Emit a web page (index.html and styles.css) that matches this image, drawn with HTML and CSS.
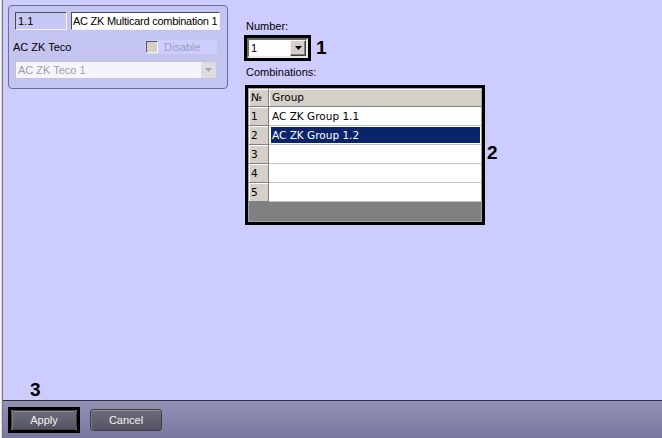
FILE: index.html
```html
<!DOCTYPE html>
<html>
<head>
<meta charset="utf-8">
<link rel="stylesheet" href="styles.css">
</head>
<body>
<div class="app">
  <div class="edge"></div>
  <div class="main">
    <div class="content">
      <div class="top">
        <div class="panel">
          <div class="row1">
            <div class="field field-id">1.1</div>
            <div class="field field-name">AC ZK Multicard combination 1</div>
          </div>
          <div class="row2">
            <div class="label">AC ZK Teco</div>
            <div class="check"><span class="box"></span><span>Disable</span></div>
          </div>
          <div class="combo-dis">
            <div class="combo-dis-text">AC ZK Teco 1</div>
            <div class="combo-dis-btn">
              <svg width="7" height="4" viewBox="0 0 7 4"><path d="M0 0h7L3.5 4z" fill="#a4a4ac"/></svg>
            </div>
          </div>
        </div>
        <div class="right">
          <div class="cap">Number:</div>
          <div class="hlrow hlrow1">
            <div class="hl">
              <div class="combo">
                <div class="combo-text">1</div>
                <div class="combo-btn">
                  <svg width="7" height="4" viewBox="0 0 7 4"><path d="M0 0h7L3.5 4z" fill="#000"/></svg>
                </div>
              </div>
            </div>
            <div class="num">1</div>
          </div>
          <div class="cap cap2">Combinations:</div>
          <div class="hlrow hlrow2">
            <div class="hl">
              <div class="grid">
                <div class="gr head">
                  <div class="rn">№</div>
                  <div class="rg">Group</div>
                </div>
                <div class="gr">
                  <div class="rn">1</div>
                  <div class="rg">AC ZK Group 1.1</div>
                </div>
                <div class="gr">
                  <div class="rn">2</div>
                  <div class="rg sel"><span>AC ZK Group 1.2</span></div>
                </div>
                <div class="gr">
                  <div class="rn">3</div>
                  <div class="rg"></div>
                </div>
                <div class="gr">
                  <div class="rn">4</div>
                  <div class="rg"></div>
                </div>
                <div class="gr">
                  <div class="rn">5</div>
                  <div class="rg"></div>
                </div>
              </div>
            </div>
            <div class="num num2">2</div>
          </div>
        </div>
      </div>
      <div class="num num3">3</div>
    </div>
    <div class="bar">
      <div class="hl hl-btn"><div class="btn btn-apply">Apply</div></div>
      <div class="btn btn-cancel">Cancel</div>
    </div>
  </div>
</div>
</body>
</html>
```
FILE: styles.css
```css
* { box-sizing: border-box; }
html, body { margin: 0; padding: 0; }
body {
  width: 662px;
  height: 438px;
  overflow: hidden;
  background: #ccccff;
  font-family: "Liberation Sans", Arial, sans-serif;
  font-size: 11px;
  color: #000;
}
.app { display: flex; width: 662px; height: 438px; }
.edge {
  width: 3px;
  flex: none;
  background: linear-gradient(to right, #f6f6f6 0 1px, #dcdcdc 1px 2px, #767686 2px 3px);
}
.main { flex: 1; display: flex; flex-direction: column; }
.content { flex: 1; display: flex; flex-direction: column; }
.top { display: flex; align-items: flex-start; padding: 5px 0 0 5px; }

/* left group panel */
.panel {
  width: 220px;
  height: 84px;
  border: 1px solid #6e6e92;
  border-radius: 4px;
  background: #c4c4f0;
  padding: 6px 7px 0 6px;
}
.row1 { display: flex; gap: 4px; }
.field {
  height: 18px;
  border: 1px solid;
  border-color: #4a4a58 #f4f4ff #f4f4ff #4a4a58;
  padding: 1px 0 0 2px;
  line-height: 15px;
  white-space: nowrap;
  overflow: hidden;
}
.field-id { width: 52px; background: #c8c8f4; }
.field-name { width: 149px; background: #fff; padding-left: 1px; letter-spacing: -0.25px; }
.row2 { display: flex; align-items: center; height: 14px; margin: 10px 0 0 -2px; }
.label { width: 132px; line-height: 14px; }
.check {
  display: flex;
  align-items: center;
  width: 72px;
  height: 14px;
  background: #cdcdff;
  color: #9e9eb8;
}
.box {
  width: 12px;
  height: 12px;
  background: #d4d0c8;
  border: 1px solid;
  border-color: #5a5a5a #f8f8f8 #f8f8f8 #5a5a5a;
  margin: 0 6px 0 1px;
}
.combo-dis {
  display: flex;
  width: 202px;
  height: 18px;
  margin-top: 7px;
  border: 1px solid #c4c4d4;
  background: #f4f4fa;
  color: #a0a0a8;
}
.combo-dis-text { flex: 1; padding-left: 2px; line-height: 16px; }
.combo-dis-btn {
  width: 15px;
  display: flex;
  align-items: center;
  justify-content: center;
  background: #dcdce2;
}

/* right column */
.right {
  margin-left: 16px;
  display: flex;
  flex-direction: column;
  align-items: flex-start;
}
.cap { margin-top: 15px; padding-left: 2px; line-height: 13px; color: #000; }
.cap2 { margin-top: 5px; }
.hlrow { display: flex; align-items: center; }
.hlrow1 { margin-top: 2px; }
.hlrow2 { margin-top: 6px; margin-left: 1px; }
.hl { border: 3px solid #000; }
.num {
  font-family: "Liberation Sans", Arial, sans-serif;
  font-weight: bold;
  font-size: 19px;
  line-height: 20px;
  margin-left: 5px;
}
.num2 { margin-left: 2px; margin-bottom: 5px; }
.num3 { margin: auto 0 0 27px; }

.combo {
  display: flex;
  align-items: center;
  width: 61px;
  height: 20px;
  background: #fff;
  border: 2px solid;
  border-color: #6a6a6a #e8e8e8 #e8e8e8 #6a6a6a;
}
.combo-text { flex: 1; padding-left: 2px; line-height: 16px; }
.combo-btn {
  width: 16px;
  height: 16px;
  display: flex;
  align-items: center;
  justify-content: center;
  background: #d4d0c8;
  border: 1px solid;
  border-color: #f4f4f4 #404040 #404040 #f4f4f4;
  box-shadow: inset -1px -1px 0 #808080;
}

/* table */
.grid {
  width: 234px;
  height: 134px;
  border: 1px solid #a0a0a8;
  background: #808080;
  font-family: "DejaVu Sans", Verdana, sans-serif;
  font-size: 10.5px;
}
.gr { display: flex; height: 19px; }
.gr.head { height: 18px; }
.rn {
  width: 20px;
  padding-left: 2px;
  background: #d4d0c8;
  border-right: 1px solid #808080;
  border-bottom: 1px solid #808080;
  box-shadow: inset 1px 1px 0 #ffffff;
  line-height: 18px;
}
.rg {
  flex: 1;
  background: #fff;
  border-bottom: 1px solid #c4c4c4;
  padding-left: 3px;
  line-height: 18px;
  white-space: nowrap;
}
.head .rn, .head .rg { line-height: 17px; }
.head .rg {
  background: #d4d0c8;
  border-bottom: 1px solid #808080;
  box-shadow: inset 1px 1px 0 #ffffff;
}
.rg.sel { padding: 1px 1px 1px 2px; }
.rg.sel span {
  display: block;
  height: 100%;
  background: #0a246a;
  color: #fff;
  padding-left: 1px;
  line-height: 16px;
}

/* bottom bar */
.bar {
  height: 38px;
  flex: none;
  display: flex;
  align-items: center;
  padding-left: 5px;
  border-top: 1px solid #2e2e3e;
  background: linear-gradient(#9391b3, #79779f);
}
.btn {
  display: flex;
  align-items: center;
  justify-content: center;
  color: #f2f2f6;
  font-size: 11px;
  border: 1px solid #3e3e4a;
  border-radius: 3px;
  background: linear-gradient(#6c6c7a, #545462);
  box-shadow: inset 0 1px 0 #8e8e9e, inset 1px 0 0 #7c7c8c;
}
.btn-apply { width: 66px; height: 20px; }
.btn-cancel { width: 72px; height: 22px; margin-left: 10px; }
```
